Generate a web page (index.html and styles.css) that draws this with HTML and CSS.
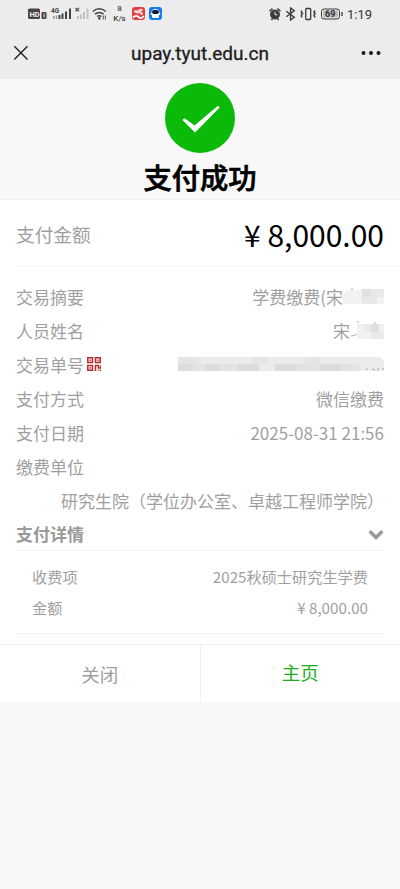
FILE: index.html
```html
<!DOCTYPE html>
<html lang="zh-CN">
<head>
<meta charset="utf-8">
<meta name="viewport" content="width=device-width, initial-scale=1">
<title>支付成功</title>
<link rel="stylesheet" href="styles.css">
</head>
<body>
<header class="top">
  <div class="status">
    <div class="status-left">
      <svg width="72" height="16" viewBox="0 0 72 16">
        <rect x="0" y="2.500" width="12" height="10.500" rx="1.500" fill="#444"/>
        <text class="hd" x="1.400" y="10.500">HD</text>
        <rect x="13.500" y="6" width="5" height="7" rx="1.200" fill="#444"/>
        <path d="M16.200 7.500v4" stroke="#eee" stroke-width="1"/>
        <text class="net" x="23" y="6.500">4G</text>
        <path d="M25.700 10v3M28.500 9.500v3.500" stroke="#999" stroke-width="1.500"/>
        <path d="M31.500 9v4M34.500 7.500v5.500M38 5.500v7.500M42 2.500v10.500" stroke="#444" stroke-width="2"/>
        <path d="M47.500 1.800l3.500 3.500M51 1.800l-3.500 3.500" stroke="#444" stroke-width="1.200"/>
        <path d="M50 10v3M53 8.500v4.500M56 6v7M59.500 2.500v10.500" stroke="#c2c2c2" stroke-width="2"/>
      </svg>
      <svg class="wifi" width="15" height="13" viewBox="0 0 15 13" fill="none" stroke="#444" stroke-width="1.500">
        <path d="M.8 4.500q6.500-5.300 13 0M3 7.200q4.300-3.500 8.600 0M5.100 9.500q2.200-1.700 4.400 0"/>
        <circle cx="7.300" cy="11.300" r=".6" fill="#444"/><path d="M11.300 8.500v4M13.300 8.500v4" stroke-width=".9"/>
      </svg>
      <div class="speed"><span>8</span><span>K/s</span></div>
      <svg class="app" width="13" height="13" viewBox="0 0 13 13">
        <rect width="13" height="13" rx="3" fill="#e23d40"/>
        <path d="M1.500 5q1-3 4-1.500Q8 .5 11 2.500L9 5q-2 2.500-5 1z" fill="#f7d3ce"/>
        <path d="M1 10.500q3-3 5.500-.5T12 9" stroke="#fff" stroke-width="1.800" fill="none"/>
        <circle cx="9.500" cy="6.500" r="1.200" fill="#fff"/>
      </svg>
      <svg width="13" height="13" viewBox="0 0 13 13">
        <rect width="13" height="13" rx="3" fill="#1479ee"/>
        <path d="M2.500 5.500q0-3.500 4-3.500t4 3.500l1 2-1.500.5v2q0 1-1.500 1h-4Q3 11 3 10V8l-1.500-.5z" fill="#fff"/>
        <rect x="3" y="3" width="7" height="4" rx="2" fill="#152034"/>
      </svg>
    </div>
    <div class="status-right">
      <svg width="74" height="14" viewBox="0 0 74 14" fill="none" stroke="#3b3b3b">
        <circle cx="6" cy="7.500" r="4.500" fill="#3b3b3b"/>
        <path d="M.5 4.300l3-2.700M11.500 4.300l-3-2.700M2.500 13l1-1.500M9.500 13l-1-1.500" stroke-width="1.500"/>
        <path d="M6 4.800v3h2.300" stroke="#eee"/>
        <path d="M17.300 4.200l8 6-3.700 2.800V1l3.700 2.800-8 6" stroke-width="1.400"/>
        <rect x="36.700" y="1.500" width="5" height="11" rx="1" stroke-width="1.300"/>
        <path d="M32.500 3.500v2l1 1-1 1v3M46 3.500l-1 1.500 1 1.500-1 1.500 1 2.500" stroke-width="1.500"/>
        <rect x="52.500" y="2" width="18" height="10" rx="2.500"/>
        <rect x="54" y="3.500" width="15" height="7" rx="1" fill="#bbb" stroke="none"/>
        <path d="M73 5v4" stroke-width="1.300"/>
        <text class="battery" x="56" y="10.300">69</text>
      </svg>
      <span class="clock">1:19</span>
    </div>
  </div>
  <nav class="titlebar">
    <svg width="16" height="16" viewBox="0 0 16 16"><path d="M1.300 1.300l13.200 13.200M14.500 1.300L1.300 14.500" stroke="#222" stroke-width="1.400"/></svg>
    <h1>upay.tyut.edu.cn</h1>
    <svg width="20" height="6" viewBox="0 0 20 6" fill="#1a1a1a"><circle cx="2.500" cy="3" r="2"/><circle cx="10" cy="3" r="2"/><circle cx="17.500" cy="3" r="2"/></svg>
  </nav>
</header>

<section class="result">
  <svg width="70" height="70" viewBox="0 0 70 70">
    <circle cx="35" cy="35" r="35" fill="#0bba08"/>
    <path d="M17.500 37q1-2 2.500-1.500l9.500 7L52 23.500q2-.8 2.700 1L30 49.500z" fill="#fff"/>
  </svg>
  <h2>支付成功</h2>
</section>

<main class="card">
  <div class="amount"><span>支付金额</span><strong>¥ 8,000.00</strong></div>
  <div class="rows">
    <div class="row"><span>交易摘要</span><span class="masked">学费缴费(宋
      <svg width="41" height="17" viewBox="0 0 41 17"><path d="M0 6L6 2h35v14H0z" fill="#f1f1f1"/><path d="M19 1h8v8h-8z" fill="#dfdfdf"/><path d="M27 1h14v8H27zM19 9h15v7H19z" fill="#e8e8e8"/><path d="M9 0v2" stroke="#aaa"/></svg></span></div>
    <div class="row"><span>人员姓名</span><span class="masked">宋
      <svg width="34" height="19" viewBox="0 0 34 19"><path d="M7 3h27v15H7z" fill="#f1f1f1"/><path d="M21 3h8v8h-8z" fill="#dfdfdf"/><path d="M13 3h8v8h-8zM21 11h13v7H21z" fill="#eaeaea"/><path d="M1 15q4 0 6-2M8 0v2M25 1v2" stroke="#aaa" fill="none"/></svg></span></div>
    <div class="row"><span class="order">交易单号
      <svg width="14" height="14" viewBox="0 0 14 14" fill="none" stroke="#b82a2a" stroke-width="1.500"><path d="M.8.8h4.700v4.700H.8zM8.500.8h4.700v4.700H8.500zM.8 8.500h4.700v4.700H.8z"/><path d="M2.500 3.200h1.400M10.200 3.200h1.400M2.500 10.900h1.400M8.500 14V8.500h3V11h2.500V8M10.500 13.200h1M12.700 13.200h1.300"/></svg></span>
      <svg class="serial" width="208" height="18" viewBox="0 0 208 18"><path d="M1 2h200q6 1 6 6v8H1z" fill="#ebebeb"/><path d="M1 9h13v7H1zM29 9h14v7H29zM61 9h21v7H61zM98 9h21v7H98zM143 9h21v7h-21z" fill="#dcdcdc"/><path d="M14 9h15v7H14zM43 9h18v7H43zM119 9h24v7h-24zM164 9h18v7h-18z" fill="#e3e3e3"/><path d="M1 2h20v7H1zM75 2h15v7H75zM128 2h15v7h-15z" fill="#e5e5e5"/><path d="M189 14h2M195 14l3 1M201 13v3M205 14h2" stroke="#aaa"/></svg></div>
    <div class="row"><span>支付方式</span><span>微信缴费</span></div>
    <div class="row"><span>支付日期</span><span>2025-08-31 21:56</span></div>
    <div class="row"><span>缴费单位</span></div>
    <div class="row row-end"><span>研究生院（学位办公室、卓越工程师学院）</span></div>
    <div class="row row-head"><span>支付详情</span>
      <svg width="16" height="12" viewBox="0 0 16 12"><path d="M1.700 3.200L8 9.500l6.300-6.300" fill="none" stroke="#999" stroke-width="3.500"/></svg></div>
  </div>
  <div class="details">
    <div class="detail"><span>收费项</span><span>2025秋硕士研究生学费</span></div>
    <div class="detail"><span>金额</span><span>¥ 8,000.00</span></div>
  </div>
  <footer class="actions"><a>关闭</a><a class="home">主页</a></footer>
</main>
</body>
</html>
```

FILE: styles.css
```css
* { box-sizing: border-box; }
body {
  margin: 0;
  background: #f8f8f8;
  color: #9f9f9f;
  font-family: "Noto Sans CJK SC", sans-serif;
}
svg { display: block; flex: none; }
h1, h2 { margin: 0; }

.top { height: 79px; background: #ececec; font-family: Roboto, sans-serif; }
.status {
  display: flex;
  justify-content: space-between;
  height: 27px;
  padding: 0 28px 0 28px;
}
.status-left, .status-right { display: flex; align-items: center; }
.hd { font: bold 7.500px Roboto, sans-serif; fill: #eee; }
.net { font: bold 6.500px Roboto, sans-serif; fill: #444; }
.battery { font: bold 9px Roboto, sans-serif; fill: #333; stroke: none; }
.wifi { margin-right: 6px; margin-left: -8px; }
.speed {
  display: flex;
  flex-direction: column;
  align-items: center;
  width: 13px;
  font-size: 8px;
  font-weight: 500;
  line-height: 10px;
  color: #444;
  margin-right: 6px;
}
.app { margin-right: 4px; }
.clock { margin-left: 4px; font-size: 13px; color: #333; padding-top: 1px; }
.titlebar {
  display: grid;
  grid-template-columns: 20px 1fr 20px;
  align-items: center;
  justify-items: center;
  height: 52px;
  padding: 0 19px 0 11px;
}
.titlebar h1 {
  font-size: 19px;
  font-weight: 400;
  color: #1d1d1d;
  -webkit-text-stroke: .3px #1d1d1d;
  padding: 1px 0 0 8px;
}

.result {
  display: flex;
  flex-direction: column;
  align-items: center;
  height: 120px;
  padding-top: 4px;
}
.result h2 {
  font-size: 28.300px;
  line-height: 46px;
  font-weight: 500;
  color: #000;
  -webkit-text-stroke: .7px #000;
  margin-top: 1px;
}

.card { background: #fff; border-top: 1px solid #f0f0f0; }
.amount {
  display: flex;
  justify-content: space-between;
  align-items: center;
  height: 67px;
  margin-left: 16px;
  padding-right: 16px;
  border-bottom: 1px solid #f5f5f5;
  font-size: 18.700px;
}
.amount strong { font-size: 30px; font-weight: 400; color: #000; padding-top: 2px; }
.rows { margin: 0 16px; padding-top: 12px; border-bottom: 1px solid #f6f6f6; font-size: 17px; }
.row { display: flex; justify-content: space-between; align-items: center; height: 34px; }
.masked, .order { display: flex; align-items: center; }
.order { gap: 3px; }
.serial { margin-right: -1px; }
.row-end { justify-content: flex-end; }
.row-head { font-weight: 700; color: #999; height: 33px; }
.details { margin: 0 16px; padding: 9px 16px 11px; border-bottom: 1px solid #f3f3f3; font-size: 15.200px; }
.detail { display: flex; justify-content: space-between; align-items: center; height: 31px; }
.actions { display: flex; height: 58px; margin-top: 10px; border-top: 1px solid #f0f0f0; font-size: 18.500px; }
.actions a { flex: 1; display: flex; align-items: center; justify-content: center; }
.actions .home { padding-bottom: 3px; border-left: 1px solid #f0f0f0; color: #1aad19; }
```
